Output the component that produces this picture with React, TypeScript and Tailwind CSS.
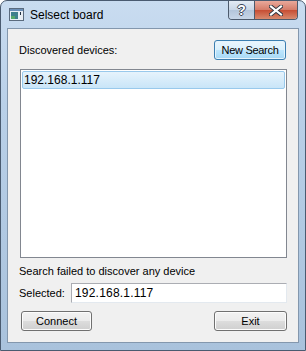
import React from "react";

const font = { fontFamily: '"Liberation Sans", Arial, sans-serif' };

function WinButton({ label, primary, width }: { label: string; primary?: boolean; width: string }) {
  return (
    <button
      className={`${width} flex h-[20px] items-center justify-center rounded-[3px] border text-[11px] text-black ${
        primary
          ? "border-[#3c7fb1] bg-[linear-gradient(to_bottom,#eaf6fd_0%,#d9f0fc_50%,#bee6fd_51%,#a7d9f5_100%)] tracking-[-0.3px] shadow-[inset_0_0_0_1px_#e6f4fc]"
          : "border-[#707070] bg-[linear-gradient(to_bottom,#f2f2f2_0%,#ebebeb_50%,#dddddd_51%,#cfcfcf_100%)] shadow-[inset_0_0_0_1px_#fcfcfc]"
      }`}
    >
      {label}
    </button>
  );
}

function AppIcon() {
  return (
    <svg width="15" height="13" viewBox="0 0 15 13">
      <rect x="0.5" y="0.5" width="14" height="12" fill="#e8eef5" stroke="#5a6b7e" />
      <rect x="1" y="1" width="13" height="2" fill="#6b8fb8" />
      <rect x="2" y="4" width="7" height="7" fill="#3f7f8c" />
      <rect x="2" y="8" width="4" height="3" fill="#55a86a" />
      <rect x="11" y="4" width="1" height="3" fill="#203040" />
    </svg>
  );
}

export default function App() {
  return (
    <div
      style={font}
      className="flex h-[351px] w-[306px] flex-col rounded-t-[7px] border border-[#4a5b70] bg-[linear-gradient(to_bottom,#c9dcf0_0%,#b9d0e8_30%,#a9c2dc_100%)] px-[6px] pb-[7px]"
    >
      {/* title bar */}
      <div className="flex h-[27px] items-start justify-between">
        <div className="flex items-center gap-[6px] pl-[2px] pt-[7px]">
          <AppIcon />
          <span className="text-[12px] leading-none text-black">Selsect board</span>
        </div>
        <div className="mr-[1px] flex h-[19px] overflow-hidden rounded-b-[4px] border border-t-0 border-[#4c5a6c]">
          <div className="flex w-[26px] items-center justify-center border-r border-[#4c5a6c] bg-[linear-gradient(to_bottom,#e3ebf4_0%,#c8d6e6_50%,#b3c5da_51%,#c7d6e7_100%)] text-[14px] font-bold leading-none text-white [text-shadow:1px_0_0_#3a4656,-1px_0_0_#3a4656,0_1px_0_#3a4656,0_-1px_0_#3a4656]">
            ?
          </div>
          <div className="flex w-[42px] items-center justify-center bg-[linear-gradient(to_bottom,#e9a99b_0%,#d47b68_50%,#c74d33_51%,#d88a6e_100%)]">
            <svg width="14" height="11" viewBox="0 0 14 11">
              <path d="M2 1.5 L12 9.5 M12 1.5 L2 9.5" stroke="#2d3540" strokeWidth="4" strokeLinecap="square" />
              <path d="M2 1.5 L12 9.5 M12 1.5 L2 9.5" stroke="#ffffff" strokeWidth="2.2" strokeLinecap="square" />
            </svg>
          </div>
        </div>
      </div>

      {/* client area */}
      <div className="flex flex-1 flex-col border border-[#8397ad] bg-[#f0f0f0] px-[11px] pt-[11px] text-[11px] text-black">
        <div className="flex items-center justify-between">
          <span className="leading-none">Discovered devices:</span>
          <WinButton label="New Search" primary width="w-[72px] mr-[1px]" />
        </div>

        <div className="ml-[1px] mt-[9px] h-[189px] border border-[#828790] bg-white p-[1px]">
          <div className="flex h-[18px] items-center rounded-[2px] border border-[#99c9ec] bg-[linear-gradient(to_bottom,#e6f3fc_0%,#c9e5f8_100%)] pl-[1px] text-[12px]">
            192.168.1.117
          </div>
        </div>

        <div className="mt-[8px] leading-none">Search failed to discover any device</div>

        <div className="mt-[6px] flex items-center">
          <span className="w-[52px]">Selected:</span>
          <div className="flex h-[20px] flex-1 items-center border border-[#abadb3] border-r-[#e3e9ef] border-b-[#e3e9ef] bg-white pl-[3px] text-[12px] tracking-[0.2px]">
            192.168.1.117
          </div>
        </div>

        <div className="ml-[2px] mt-[8px] flex justify-between">
          <WinButton label="Connect" width="w-[71px]" />
          <WinButton label="Exit" width="w-[73px]" />
        </div>
      </div>
    </div>
  );
}
